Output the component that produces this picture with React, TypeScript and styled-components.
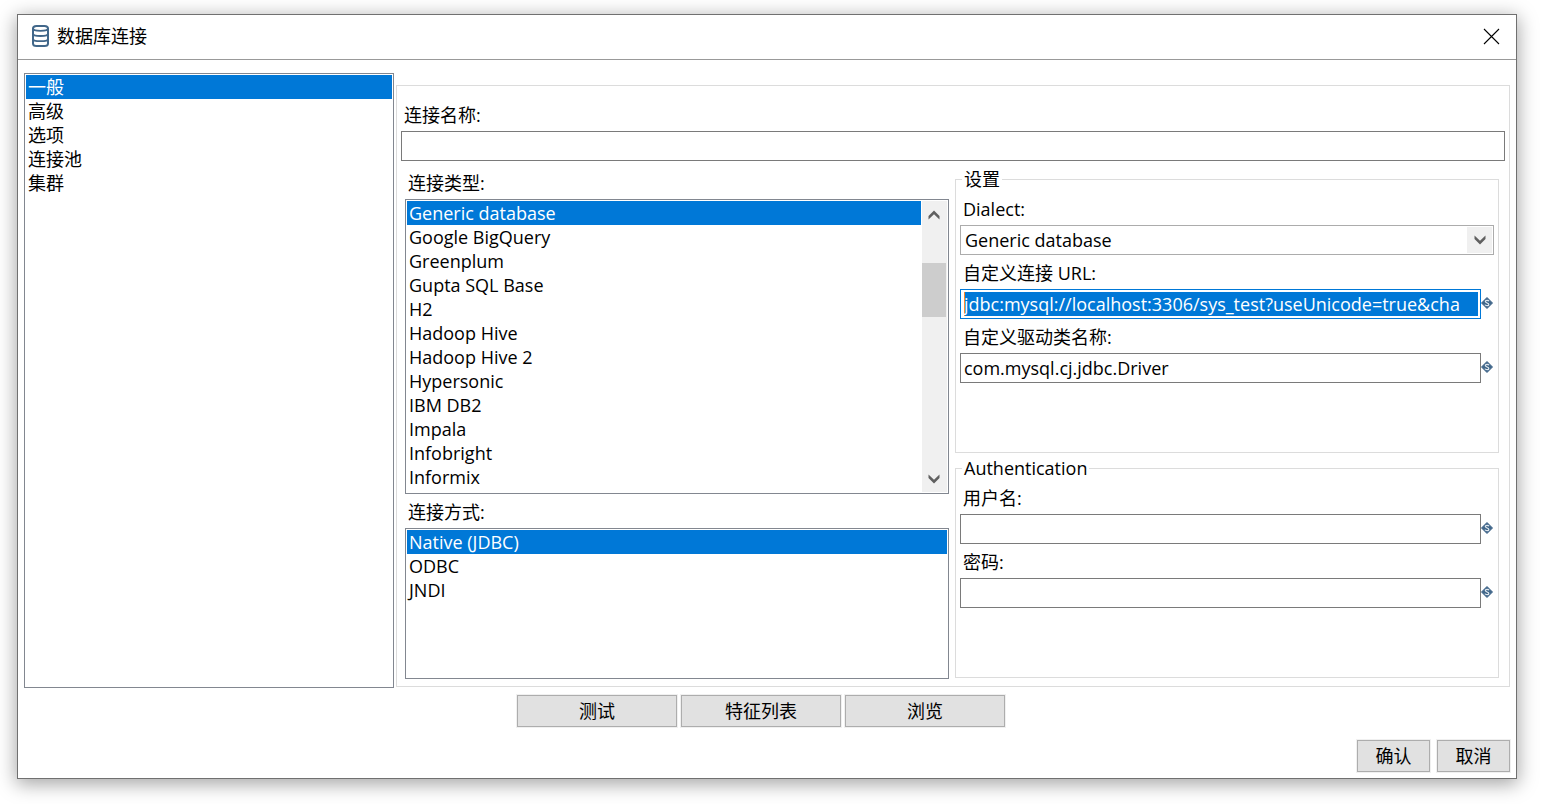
import React, { useState } from 'react';
import styled, { createGlobalStyle, css } from 'styled-components';

const GlobalStyle = createGlobalStyle`
  *, *::before, *::after { box-sizing: border-box; }
  body { margin: 0; background: #fff; }
  body, button, input, select {
    font-family: "Open Sans", "Noto Sans CJK SC", sans-serif;
    font-size: 18px;
    line-height: 24px;
    color: #000;
  }
`;

const Page = styled.main`
  display: flex;
  min-height: 100vh;
  padding: 14px 37px 25px 17px;
`;

const Dialog = styled.section`
  flex: 1;
  min-width: 0;
  display: flex;
  flex-direction: column;
  background: #fff;
  border: 1px solid #707070;
  box-shadow: 0 4px 18px 1px rgba(0, 0, 0, 0.36);
`;

const TitleBar = styled.header`
  display: flex;
  align-items: center;
  height: 45px;
  padding: 0 16px 2px 13px;
  border-bottom: 1px solid #999;
`;

const Title = styled.h1`
  flex: 1;
  margin: 0 0 0 7px;
  font-size: 18px;
  font-weight: 400;
  line-height: 24px;
`;

const CloseButton = styled.button`
  display: flex;
  padding: 0;
  border: 0;
  background: none;
`;

const Body = styled.div`
  flex: 1;
  display: flex;
  gap: 2px;
  padding: 13px 6px 0;
`;

const ListFrame = styled.div<{ $grow?: boolean }>`
  display: flex;
  flex: ${(p) => (p.$grow ? '1' : 'none')};
  padding: 1px;
  border: 1px solid #828790;
`;

const Sidebar = styled(ListFrame)`
  flex: 0 0 370px;
`;

const List = styled.ul`
  flex: 1;
  min-width: 0;
  margin: 0;
  padding: 0;
  list-style: none;
`;

const Item = styled.li<{ $selected: boolean }>`
  height: 24px;
  padding: 0 2px;
  white-space: nowrap;
  cursor: default;
  ${(p) => p.$selected && css`
    background: #0078d7;
    color: #fff;
  `}
`;

const ScrollBar = styled.div`
  display: flex;
  flex-direction: column;
  align-items: center;
  width: 25px;
  height: 291px;
  margin-left: 1px;
  padding: 9px 1px 8px 0;
  background: #f0f0f0;
`;

const Thumb = styled.div`
  width: 24px;
  height: 54px;
  margin: 43px 0 auto;
  background: #cdcdcd;
`;

const Panel = styled.section`
  flex: 1;
  min-width: 0;
  display: flex;
  flex-direction: column;
  margin: 12px 0 1px;
  padding: 17px 4px 7px;
  border: 1px solid #dcdcdc;
`;

const Columns = styled.div`
  flex: 1;
  display: grid;
  grid-template-columns: minmax(0, 1fr) minmax(0, 1fr);
  gap: 6px;
  margin: 6px 6px 0 4px;
`;

const TypeColumn = styled.div`
  display: flex;
  flex-direction: column;
  gap: 6px;
  padding-top: 4px;
`;

const SettingsColumn = styled.div`
  display: flex;
  flex-direction: column;
  gap: 3px;
  padding-bottom: 1px;
`;

const Field = styled.div<{ $grow?: boolean }>`
  display: flex;
  flex-direction: column;
  flex: ${(p) => (p.$grow ? '1' : 'none')};
  gap: 4px;
`;

const Caption = styled.label`
  padding-left: 3px;
`;

const Group = styled.fieldset<{ $grow?: boolean }>`
  flex: ${(p) => (p.$grow ? '1' : 'none')};
  min-width: 0;
  min-height: ${(p) => (p.$grow ? '0' : '286px')};
  margin: 0;
  padding: 6px 4px;
  border: 1px solid #dcdcdc;
`;

const Legend = styled.legend`
  margin-left: 2px;
  padding: 0 2px;
`;

const GroupFields = styled.div`
  display: flex;
  flex-direction: column;
  gap: 6px;
`;

const InputRow = styled.div`
  display: flex;
  align-items: center;
`;

const TextInput = styled.input<{ $highlighted?: boolean }>`
  flex: 1;
  min-width: 0;
  height: 30px;
  padding: 2px 2px 2px 3px;
  border: 1px solid #7a7a7a;
  border-radius: 0;
  outline: 0;
  background: #fff;
  ${(p) => p.$highlighted && css`
    border-color: #0078d7;
    color: #fff;
    background: linear-gradient(to right, #ff8728 1px, #0078d7 1px) content-box;
  `}
`;

const NameInput = styled(TextInput)`
  flex: none;
  width: 100%;
`;

const VariableMark = styled.span`
  display: flex;
  width: 13px;
  padding-bottom: 2px;
`;

const SelectBox = styled.div`
  display: grid;
  grid-template-columns: minmax(0, 1fr) 25px;
  height: 30px;
  padding: 1px;
  border: 1px solid #acacac;
`;

const Select = styled.select`
  grid-area: 1 / 1 / 2 / 3;
  min-width: 0;
  padding: 0 27px 0 3px;
  border: 0;
  outline: 0;
  appearance: none;
  background: none;
`;

const SelectArrow = styled.span`
  grid-area: 1 / 2;
  display: flex;
  align-items: center;
  justify-content: center;
  background: #f0f0f0;
  pointer-events: none;
`;

const Actions = styled.div`
  display: flex;
  justify-content: center;
  gap: 4px;
  padding: 7px 12px 0 0;
`;

const Footer = styled.footer`
  display: flex;
  justify-content: flex-end;
  gap: 7px;
  padding: 13px 6px 6px;
`;

const Button = styled.button<{ $wide?: boolean }>`
  width: ${(p) => (p.$wide ? '160px' : '73px')};
  height: 32px;
  padding: 0;
  border: 1px solid #adadad;
  background: #e1e1e1;
  box-shadow: 0 0 0 1px #f0f0f0;
`;

const DatabaseIcon = () => (
  <svg width="19" height="24" viewBox="0 0 19 24" fill="none" stroke="#41678a" strokeWidth="2" aria-hidden="true">
    <rect x="2" y="2" width="15" height="20" rx="3.5" ry="2.5" />
    <path d="M2 4.500c0 1.600 3 2.300 7.500 2.300s7.500-.7 7.500-2.300M2 9.700c0 1.600 3 2.300 7.500 2.300s7.500-.7 7.500-2.300M2 14.900c0 1.600 3 2.300 7.500 2.300s7.500-.7 7.500-2.300" strokeWidth="1.800" />
  </svg>
);

const CloseIcon = () => (
  <svg width="17" height="17" viewBox="0 0 17 17" fill="none" stroke="#000" strokeWidth="1.1" aria-hidden="true">
    <path d="M1 1l15 15M16 1L1 16" />
  </svg>
);

const Chevron = ({ up }: { up?: boolean }) => (
  <svg width="12" height="10" viewBox="0 0 12 10" fill="#606060" aria-hidden="true">
    <path d={up ? 'M6 .6L11.500 6v3.500L6 4.200.5 9.500V6z' : 'M6 9.400L11.500 4V.5L6 5.800.5.5V4z'} />
  </svg>
);

const DiamondIcon = () => (
  <svg width="12" height="12" viewBox="0 0 12 12" fill="none" aria-hidden="true">
    <path d="M6 .5L11.500 6 6 11.500.5 6z" fill="#41678a" stroke="#41678a" strokeLinejoin="round" />
    <path d="M7.900 4.300C7.400 2.900 4.300 3 4.300 4.600S7.800 5.700 7.800 7.400 4.600 9.100 4 7.600" stroke="#dfe7ee" strokeWidth="1.200" />
  </svg>
);

const sections = ['一般', '高级', '选项', '连接池', '集群'];
const databases = [
  'Generic database', 'Google BigQuery', 'Greenplum', 'Gupta SQL Base', 'H2', 'Hadoop Hive',
  'Hadoop Hive 2', 'Hypersonic', 'IBM DB2', 'Impala', 'Infobright', 'Informix',
];
const methods = ['Native (JDBC)', 'ODBC', 'JNDI'];

function OptionList({ items, labelledBy }: { items: string[]; labelledBy: string }) {
  const [current, setCurrent] = useState(items[0]);
  return (
    <List role="listbox" aria-labelledby={labelledBy} tabIndex={0}>
      {items.map((item) => (
        <Item key={item} role="option" aria-selected={item === current} $selected={item === current} onClick={() => setCurrent(item)}>
          {item}
        </Item>
      ))}
    </List>
  );
}

function VariableField({ id, label, type = 'text', value = '', highlighted }: {
  id: string; label: string; type?: string; value?: string; highlighted?: boolean;
}) {
  return (
    <Field>
      <Caption htmlFor={id}>{label}</Caption>
      <InputRow>
        <TextInput id={id} type={type} defaultValue={value} $highlighted={highlighted} spellCheck={false} />
        <VariableMark><DiamondIcon /></VariableMark>
      </InputRow>
    </Field>
  );
}

export default function App() {
  return (
    <>
      <GlobalStyle />
      <Page>
        <Dialog role="dialog" aria-labelledby="title">
          <TitleBar>
            <DatabaseIcon />
            <Title id="title">数据库连接</Title>
            <CloseButton type="button"><CloseIcon /></CloseButton>
          </TitleBar>
          <Body>
            <Sidebar>
              <OptionList items={sections} labelledBy="title" />
            </Sidebar>
            <Panel>
              <Field>
                <Caption htmlFor="name">连接名称:</Caption>
                <NameInput id="name" type="text" />
              </Field>
              <Columns>
                <TypeColumn>
                  <Field>
                    <Caption as="span" id="type-label">连接类型:</Caption>
                    <ListFrame>
                      <OptionList items={databases} labelledBy="type-label" />
                      <ScrollBar>
                        <Chevron up />
                        <Thumb />
                        <Chevron />
                      </ScrollBar>
                    </ListFrame>
                  </Field>
                  <Field $grow>
                    <Caption as="span" id="method-label">连接方式:</Caption>
                    <ListFrame $grow>
                      <OptionList items={methods} labelledBy="method-label" />
                    </ListFrame>
                  </Field>
                </TypeColumn>
                <SettingsColumn>
                  <Group>
                    <Legend>设置</Legend>
                    <GroupFields>
                      <Field>
                        <Caption htmlFor="dialect">Dialect:</Caption>
                        <SelectBox>
                          <Select id="dialect" defaultValue="Generic database">
                            <option>Generic database</option>
                          </Select>
                          <SelectArrow><Chevron /></SelectArrow>
                        </SelectBox>
                      </Field>
                      <VariableField
                        id="url"
                        label="自定义连接 URL:"
                        value="jdbc:mysql://localhost:3306/sys_test?useUnicode=true&cha"
                        highlighted
                      />
                      <VariableField id="driver" label="自定义驱动类名称:" value="com.mysql.cj.jdbc.Driver" />
                    </GroupFields>
                  </Group>
                  <Group $grow>
                    <Legend>Authentication</Legend>
                    <GroupFields>
                      <VariableField id="user" label="用户名:" />
                      <VariableField id="password" label="密码:" type="password" />
                    </GroupFields>
                  </Group>
                </SettingsColumn>
              </Columns>
            </Panel>
          </Body>
          <Actions>
            <Button type="button" $wide>测试</Button>
            <Button type="button" $wide>特征列表</Button>
            <Button type="button" $wide>浏览</Button>
          </Actions>
          <Footer>
            <Button type="button">确认</Button>
            <Button type="button">取消</Button>
          </Footer>
        </Dialog>
      </Page>
    </>
  );
}
